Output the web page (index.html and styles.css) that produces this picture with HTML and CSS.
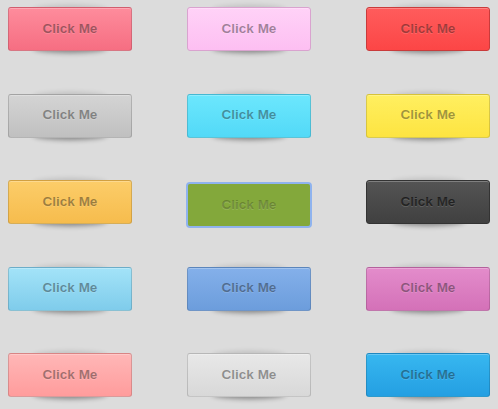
FILE: index.html
```html
<!DOCTYPE html>
<html lang="en">
<head>
  <meta charset="UTF-8">
  <title>Buttons</title>
  <link rel="stylesheet" href="styles.css">
</head>
<body>
  <div class="grid">
    <button class="btn rose">Click Me</button>
    <button class="btn candy">Click Me</button>
    <button class="btn red">Click Me</button>
    <button class="btn silver">Click Me</button>
    <button class="btn cyan">Click Me</button>
    <button class="btn yellow">Click Me</button>
    <button class="btn orange">Click Me</button>
    <button class="btn green pressed">Click Me</button>
    <button class="btn dark">Click Me</button>
    <button class="btn sky">Click Me</button>
    <button class="btn blue">Click Me</button>
    <button class="btn orchid">Click Me</button>
    <button class="btn salmon">Click Me</button>
    <button class="btn light">Click Me</button>
    <button class="btn azure">Click Me</button>
  </div>
</body>
</html>
```

FILE: styles.css
```css
body {
  margin: 0;
  background: #dcdcdc;
  font-family: 'Liberation Sans', Arial, sans-serif;
  height: 409px;
  overflow: hidden;
}

.grid {
  position: relative;
  z-index: 0;
  display: grid;
  grid-template-columns: repeat(3, 124px);
  grid-auto-rows: 44px;
  column-gap: 55px;
  row-gap: 42.5px;
  padding: 7px 0 0 8px;
}

.btn {
  position: relative;
  width: 124px;
  height: 44px;
  margin: 0;
  padding: 0 0 2px;
  border: 1px solid rgba(0, 0, 0, 0.15);
  border-radius: 3px;
  font-family: inherit;
  font-size: 13.5px;
  font-weight: bold;
  color: rgba(0, 0, 0, 0.38);
  text-shadow: 0 1px 0 rgba(255, 255, 255, 0.15);
  box-shadow: inset 0 1px 0 rgba(255, 255, 255, 0.25);
  cursor: pointer;
}

/* curved shadows above and below */
.btn::before,
.btn::after {
  content: '';
  position: absolute;
  left: 20%;
  right: 20%;
  height: 10px;
  border-radius: 50%;
  z-index: -1;
}

.btn::after {
  bottom: 0;
  box-shadow: 0 3px 5px rgba(0, 0, 0, 0.4);
}

.btn::before {
  top: 0;
  box-shadow: 0 -3px 5px rgba(0, 0, 0, 0.13);
}

.rose   { background: linear-gradient(#fe8c9c, #f66e82); }
.candy  { background: linear-gradient(#ffd2f7, #fdbff2); border-color: #d9a3cf; }
.red    { background: linear-gradient(#ff5c5c, #fc4646); border-color: #c93b3b; }
.silver { background: linear-gradient(#d4d4d4, #c0c0c0); }
.cyan   { background: linear-gradient(#6ce7fd, #52d9f7); }
.yellow { background: linear-gradient(#ffef60, #fde441); }
.orange { background: linear-gradient(#fccd69, #f6bc4d); }
.dark   { background: linear-gradient(#545454, #404040); border-color: #333; color: rgba(0, 0, 0, 0.6); }
.sky    { background: linear-gradient(#a3e3f8, #7fcceb); }
.blue   { background: linear-gradient(#84b0ea, #6c9ddc); }
.orchid { background: linear-gradient(#e38ccb, #d471b8); }
.salmon { background: linear-gradient(#ffb7b7, #ff9c9c); }
.light  { background: linear-gradient(#e8e8e8, #d8d8d8); }
.azure  { background: linear-gradient(#37b7f0, #249fe2); }

.green {
  background: #83a83b;
  border-color: #6f9130;
}

.pressed {
  top: 3px;
  outline: 2px solid #8fb3ee;
  outline-offset: -1px;
  color: rgba(0, 0, 0, 0.22);
  box-shadow: none;
}

.pressed::before,
.pressed::after {
  display: none;
}
```
